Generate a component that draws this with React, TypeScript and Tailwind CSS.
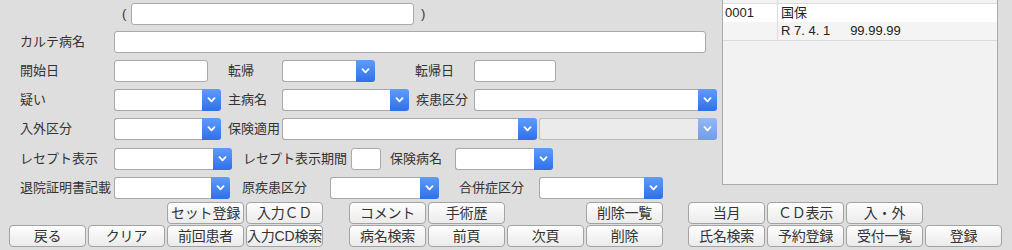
import React from 'react';

const Chevron = () => (
  <svg width="9" height="6" viewBox="0 0 9 6">
    <path d="M1.5 1.2 L4.5 4.3 L7.5 1.2" stroke="white" strokeWidth="1.8" fill="none" strokeLinecap="round" strokeLinejoin="round" />
  </svg>
);

const Select = ({ className, disabled }: { className: string; disabled?: boolean }) => (
  <div className={`flex h-[22px] shrink-0 ${className}`}>
    <div
      className={`flex-1 rounded-l-[3px] border border-r-0 ${
        disabled ? 'border-[#bdbdbd] bg-[#ebebeb]' : 'border-[#a9a9a9] bg-white'
      }`}
    />
    <div
      className={`flex w-[19px] items-center justify-center rounded-r-[3px] ${
        disabled ? 'bg-linear-to-b from-[#94b8f6] to-[#729ce8]' : 'bg-linear-to-b from-[#5e9cfa] to-[#2f6fea]'
      }`}
    >
      <Chevron />
    </div>
  </div>
);

const Input = ({ className }: { className: string }) => (
  <div className={`h-[22px] shrink-0 rounded-[3px] border border-[#a9a9a9] bg-white ${className}`} />
);

const Label = ({ className, children }: { className: string; children: React.ReactNode }) => (
  <span className={`shrink-0 whitespace-nowrap text-[13px] leading-[22px] text-[#333] ${className}`}>{children}</span>
);

const Btn = ({ children }: { children: React.ReactNode }) => (
  <button className="flex h-[22px] w-[77px] items-center justify-center overflow-visible whitespace-nowrap rounded-[4px] border border-[#a3a3a3] bg-linear-to-b from-[#fefefe] to-[#ebebeb] p-0 text-[14px] leading-[20px] tracking-[-0.2px] text-[#333]">
    {children}
  </button>
);

const Empty = () => <div className="w-[77px]" />;

const App: React.FC = () => {
  // three button groups per row, empty string = gap slot
  const row1: string[][] = [
    ['', '', 'セット登録', '入力ＣＤ'],
    ['コメント', '手術歴', '', '削除一覧'],
    ['当月', 'ＣＤ表示', '入・外', ''],
  ];
  const row2: string[][] = [
    ['戻る', 'クリア', '前回患者', '入力CD検索'],
    ['病名検索', '前頁', '次頁', '削除'],
    ['氏名検索', '予約登録', '受付一覧', '登録'],
  ];

  const renderRow = (groups: string[][]) => (
    <div className="flex h-[22px] pl-[9px]">
      {groups.map((g, gi) => (
        <div key={gi} className={`flex gap-[2px] ${gi === 1 ? 'ml-[26px]' : gi === 2 ? 'ml-[25px]' : ''}`}>
          {g.map((t, i) => (t ? <Btn key={i}>{t}</Btn> : <Empty key={i} />))}
        </div>
      ))}
    </div>
  );

  return (
    <div className="h-[250px] w-[1012px] overflow-hidden bg-[#dedede] font-['Liberation_Sans','Noto_Sans_CJK_JP',sans-serif]">
      <div className="flex h-[201px]">
        {/* left form */}
        <div className="flex w-[722px] shrink-0 flex-col pt-[3px]">
          <div className="flex h-[22px] pl-[122px]">
            <Label className="w-[9px]">(</Label>
            <Input className="w-[283px]" />
            <Label className="ml-[7px]">)</Label>
          </div>
          <div className="mt-[6px] flex h-[22px] pl-[20px]">
            <Label className="w-[94px]">カルテ病名</Label>
            <Input className="w-[592px]" />
          </div>
          <div className="mt-[7px] flex h-[22px] pl-[20px]">
            <Label className="w-[94px]">開始日</Label>
            <Input className="w-[94px]" />
            <Label className="ml-[20px] w-[54px]">転帰</Label>
            <Select className="w-[93px]" />
            <Label className="ml-[40px] w-[59px]">転帰日</Label>
            <Input className="w-[82px]" />
          </div>
          <div className="mt-[7px] flex h-[22px] pl-[20px]">
            <Label className="w-[94px]">疑い</Label>
            <Select className="w-[107px]" />
            <Label className="ml-[7px] w-[54px]">主病名</Label>
            <Select className="w-[127px]" />
            <Label className="ml-[7px] w-[58px]">疾患区分</Label>
            <Select className="w-[243px]" />
          </div>
          <div className="mt-[7px] flex h-[22px] pl-[20px]">
            <Label className="w-[94px]">入外区分</Label>
            <Select className="w-[107px]" />
            <Label className="ml-[7px] w-[54px]">保険適用</Label>
            <Select className="w-[255px]" />
            <Select className="ml-[2px] w-[178px]" disabled />
          </div>
          <div className="mt-[8px] flex h-[22px] pl-[20px]">
            <Label className="w-[94px]">レセプト表示</Label>
            <Select className="w-[118px]" />
            <Label className="ml-[11px] w-[108px]">レセプト表示期間</Label>
            <Input className="w-[30px]" />
            <Label className="ml-[9px] w-[65px]">保険病名</Label>
            <Select className="w-[98px]" />
          </div>
          <div className="mt-[7px] flex h-[22px] pl-[20px]">
            <Label className="w-[94px]">退院証明書記載</Label>
            <Select className="w-[116px]" />
            <Label className="ml-[12px] w-[88px]">原疾患区分</Label>
            <Select className="w-[109px]" />
            <Label className="ml-[20px] w-[80px]">合併症区分</Label>
            <Select className="w-[124px]" />
          </div>
        </div>

        {/* right list panel */}
        <div className="flex h-[185px] w-[276px] shrink-0 flex-col border-x border-b border-[#ababab] bg-[#f2f2f2] text-[13px] text-[#222]">
          <div className="flex h-[4px] border-b border-[#dcdcdc]">
            <div className="w-[55px] border-r border-[#dcdcdc]" />
          </div>
          <div className="flex h-[18px] bg-white leading-[18px]">
            <div className="w-[55px] border-r border-[#dcdcdc] pl-[2px]">0001</div>
            <div className="pl-[3px]">国保</div>
          </div>
          <div className="flex h-[19px] border-b border-[#dcdcdc] bg-[#f4f4f4] leading-[18px]">
            <div className="w-[55px] border-r border-[#dcdcdc]" />
            <div className="pl-[3px]">R 7. 4. 1</div>
            <div className="ml-[20px]">99.99.99</div>
          </div>
        </div>
      </div>

      <div className="mt-[1px]">{renderRow(row1)}</div>
      <div className="mt-[1px]">{renderRow(row2)}</div>
    </div>
  );
};

export default App;
